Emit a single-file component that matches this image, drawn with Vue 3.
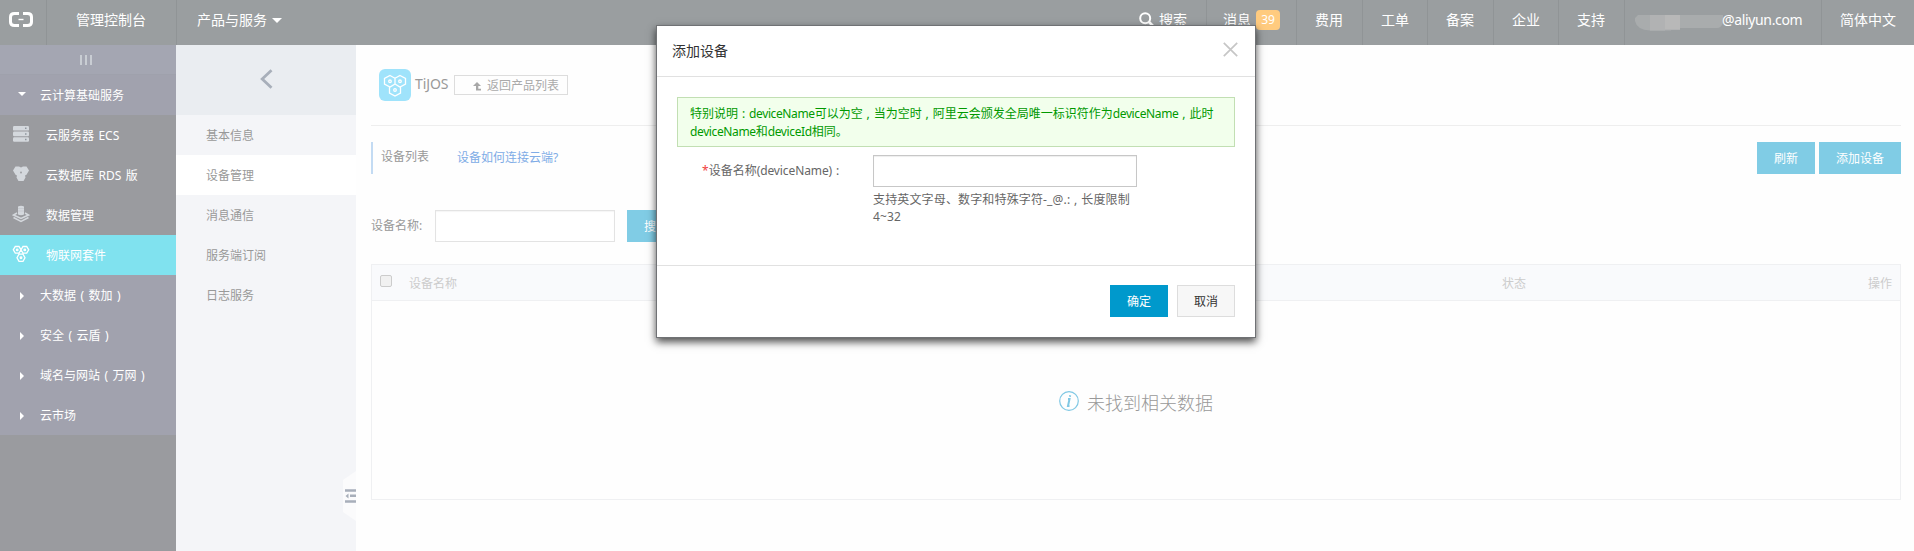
<script setup>
const links = [
  { t: '费用', w: 66 }, { t: '工单', w: 65 }, { t: '备案', w: 66 },
  { t: '企业', w: 65 }, { t: '支持', w: 66 }
]
const products = [
  { t: '云服务器 ECS', i: 'ecs' }, { t: '云数据库 RDS 版', i: 'rds' },
  { t: '数据管理', i: 'data' }, { t: '物联网套件', i: 'iot' }
]
const groups = [
  { t: '大数据', n: '数加' }, { t: '安全', n: '云盾' },
  { t: '域名与网站', n: '万网' }, { t: '云市场' }
]
const subs = ['基本信息', '设备管理', '消息通信', '服务端订阅', '日志服务']
</script>

<template>
  <div class="page">
    <header class="top">
      <div class="logo">
        <svg width="24" height="15" viewBox="0 0 24 15" fill="none" stroke="#fff" stroke-width="3">
          <path d="M10 1.5H5.5Q1.5 1.5 1.5 5V10Q1.5 13.5 5.5 13.5H10M14 1.5H18.5Q22.5 1.5 22.5 5V10Q22.5 13.5 18.5 13.5H14" />
          <path d="M9.5 7.5H14.5" stroke-width="1.4" />
        </svg>
      </div>
      <div class="console">管理控制台</div>
      <div class="prod">产品与服务<i class="caret"></i></div>
      <div class="search">
        <svg width="16" height="16" viewBox="0 0 16 16" fill="none" stroke="#fff" stroke-width="2"><circle cx="6.2" cy="6.2" r="5" /><path d="M10 10L14.5 14.5" stroke-width="2.6" /></svg>
        <span>搜索</span>
      </div>
      <div class="msg">消息<b class="badge">39</b></div>
      <div v-for="l in links" :key="l.t" class="link" :style="{ width: l.w + 'px' }">{{ l.t }}</div>
      <div class="account">
        <svg width="88" height="17" viewBox="0 0 88 17"><path d="M3 0H88V8Q86 13 82 13H45V15H36V15.500H15Q2 15 0 6V3Z" fill="#a9acad" /><path d="M15 0H30V15.500H15Z" fill="#b1b2b3" /><path d="M30 0H45V14.500H30Z" fill="#b8b8b8" /></svg>
        <span>@aliyun.com</span>
      </div>
      <div class="lang">简体中文</div>
    </header>

    <div class="body">
      <nav class="side">
        <div class="toggle"><i></i><i></i><i></i></div>
        <div class="group"><span class="arr"><i class="down"></i></span>云计算基础服务</div>
        <div v-for="p in products" :key="p.t" class="item" :class="{ on: p.i === 'iot' }">
          <svg v-if="p.i === 'ecs'" width="18" height="18" viewBox="0 0 18 18"><g fill="#d4d8dd"><rect x="1" y="1" width="16" height="4.6" rx="1.2" /><rect x="1" y="6.6" width="16" height="4.6" rx="1.2" /><rect x="1" y="12.2" width="16" height="4.6" rx="1.2" /></g><path d="M13 3.3h1.5M13 8.9h1.5M13 14.5h1.5" stroke="#8f969f" stroke-width="1.5" /></svg>
          <svg v-else-if="p.i === 'rds'" width="18" height="18" viewBox="0 0 18 18"><path d="M3.5 1.5H7L9 2.600 11 1.500H14.5L17 5.5 14.5 9.8 13 10.5 13.5 12.5 11.5 16H6.5L4.500 12.500 5 10.5 3.5 9.800 1 5.5Z" fill="#d4d8dd" /><circle cx="9" cy="7.5" r=".9" fill="#9a9b9f" /></svg>
          <svg v-else-if="p.i === 'data'" width="18" height="18" viewBox="0 0 18 18"><path d="M6 1.500Q9 .2 12 1.500V9.500Q9 11 6 9.500Z" fill="#d4d8dd" /><path d="M5 8L1.500 10 9 13.500 16.500 10 13 8M1.500 12.500L9 16.300 16.500 12.500" fill="none" stroke="#d4d8dd" stroke-width="1.500" /><path d="M6 3.5h6M6 6h6" stroke="#c0c4ca" stroke-width=".6" /></svg>
          <svg v-else width="18" height="18" viewBox="0 0 18 18" fill="none" stroke="#fff" stroke-width="1.300"><path d="M3.300 1.500H7L9 4.800 7 8.200H3.300L1.300 4.800ZM11 1.500H14.700L16.700 4.800 14.700 8.200H11L9 4.800ZM7 9.200H11L13 12.700 11 16.300H7L5 12.700Z" /><circle cx="5.200" cy="4.900" r=".8" /><circle cx="12.800" cy="4.900" r=".8" /><circle cx="9" cy="12.700" r=".8" /></svg>
          <span>{{ p.t }}</span>
        </div>
        <div v-for="g in groups" :key="g.t" class="group"><span class="arr"><i class="right"></i></span>{{ g.t }}<template v-if="g.n"><i class="paren">(</i>{{ g.n }}<i class="paren">)</i></template></div>
      </nav>

      <nav class="sub">
        <div class="back"><svg width="13" height="20" viewBox="0 0 13 20" fill="none" stroke="#a8afba" stroke-width="2.800"><path d="M11.500 1.200L2.200 10 11.500 18.800" /></svg></div>
        <div v-for="(s, n) in subs" :key="s" class="subitem" :class="{ cur: n === 1 }">{{ s }}</div>
        <svg class="handle" width="13" height="50" viewBox="0 0 13 50"><path d="M13 0L0 9V41L13 50Z" fill="#fbfbfc" /><path d="M2 19.500H13M7 24.800H13M2 30.500H13" stroke="#a8afba" stroke-width="2.600" /><path d="M5.500 22.500V27.500L2.500 25Z" fill="#a8afba" /></svg>
      </nav>

      <main class="main">
        <div class="title">
          <svg width="32" height="32" viewBox="0 0 32 32" fill="none" stroke="#fff" stroke-width="1.300"><rect width="32" height="32" rx="6" fill="#9fe3fb" stroke="none" /><path d="M11 6.500L16 9.300V15L11 18 5.500 15V9.300ZM21 6.500L26.500 9.300V15L21 18 16 15V9.300ZM16 15L21.500 18.500V24L16 27 10.500 24V18.500Z" /><circle cx="11" cy="12.300" r="1.300" /><circle cx="21" cy="12.300" r="1.300" /><circle cx="16" cy="21" r="1.300" /></svg>
          <span class="name">TiJOS</span>
          <span class="return"><svg width="9" height="9" viewBox="0 0 9 9"><path d="M4 0L8 4H5.300V6.800H8V8.500H3V4H0Z" fill="#a8a8a8" /></svg>返回产品列表</span>
        </div>
        <div class="tabs">
          <span class="tab">设备列表</span><a class="help">设备如何连接云端<span>?</span></a>
          <button class="btn refresh">刷新</button><button class="btn add">添加设备</button>
        </div>
        <div class="filter"><label>设备名称:</label><span class="field"></span><button class="btn find">搜索</button></div>
        <div class="table">
          <div class="thead"><i class="check"></i><span class="c1">设备名称</span><span class="c2">状态</span><span class="c3">操作</span></div>
          <div class="empty">
            <svg width="20" height="20" viewBox="0 0 20 20" fill="none" stroke="#80c8e4"><circle cx="10" cy="10" r="9.300" stroke-width="1.200" /><path d="M9 8H10.500L9 15H10.500M11.200 4.200L10.900 5.800" stroke-width="2" /></svg>
            <span>未找到相关数据</span>
          </div>
        </div>
      </main>
    </div>

    <section class="modal">
      <div class="mhead"><span>添加设备</span><svg width="15" height="15" viewBox="0 0 15 15" stroke="#c6c6c6" stroke-width="1.700"><path d="M.8 .8L14.200 14.200M14.200 .8L.8 14.200" /></svg></div>
      <div class="mbody">
        <div class="alert">特别说明<i class="p">:</i><span class="en">deviceName</span>可以为空<i class="p">,</i>当为空时<i class="p">,</i>阿里云会颁发全局唯一标识符作为<span class="en">deviceName</span><i class="p">,</i>此时<br><span class="en">deviceName</span>和<span class="en">deviceId</span>相同。</div>
        <div class="row">
          <div class="lab"><em>*</em>设备名称<span class="wide">(deviceName)</span><i class="p">:</i></div>
          <div class="ctl"><div class="input"></div><p>支持英文字母、数字和特殊字符-_@.:<i class="p">,</i>长度限制<br>4~32</p></div>
        </div>
      </div>
      <div class="mfoot"><button class="ok">确定</button><button class="cancel">取消</button></div>
    </section>
  </div>
</template>

<style>
html, body { margin: 0; overflow: hidden; }
</style>
<style scoped>
* { box-sizing: border-box; }
.page { position: relative; width: 1914px; height: 551px; overflow: hidden; background: #fefefe; font: 12px/18px "Noto Sans", "Noto Sans CJK SC", sans-serif; color: #999; }
svg { display: block; flex: none; }
i, em { font-style: normal; }
button { border: 0; padding: 0; font: inherit; display: block; }
.top { display: flex; height: 45px; background: #9a9ea0; color: #fff; font-size: 14px; line-height: 40px; white-space: nowrap; }
.top > div { flex: none; border-right: 1px solid #909496; }
.logo { width: 47px; padding: 12px 0 0 9px; }
.console { width: 130px; padding-left: 29px; }
.top .prod { width: 962px; padding-left: 20px; display: flex; border: 0; }
.caret { border: 5px solid transparent; border-top-color: #fff; border-bottom: 0; margin: 18px 0 0 5px; height: 0; }
.top .search { width: 68px; display: flex; gap: 4px; }
.search svg { margin-top: 12px; }
.msg { width: 90px; padding-left: 16px; display: flex; }
.badge { background: #ffcb7f; width: 24px; height: 20px; line-height: 20px; margin: 10px 0 0 5px; border-radius: 4px; text-align: center; font-size: 12px; font-weight: 400; }
.link { padding-left: 18px; }
.account { width: 197px; padding-left: 10px; display: flex; }
.account svg { margin-top: 15px; }
.account span { margin-left: -1px; letter-spacing: -.35px; }
.top .lang { width: 92px; padding-left: 18px; border: 0; }

.body { display: flex; height: 506px; }
.side { width: 176px; background: #9a9b9f; color: #fff; flex: none; }
.toggle { height: 30px; background: #a4a6b2; border-bottom: 1px solid #9fa1ac; display: flex; gap: 3px; padding: 10px 0 0 80px; }
.toggle i { width: 2px; height: 10px; background: #c9cdd3; }
.group { height: 40px; line-height: 42px; background: #a1a2ae; display: flex; }
.paren { width: 12.5px; text-align: center; }
.arr { width: 40px; padding-left: 20px; display: flex; align-items: center; }
.down { border: 4px solid transparent; border-top-color: #fff; border-bottom: 0; margin-left: -2px; margin-bottom: 2px; }
.right { border: 4px solid transparent; border-left-color: #fff; border-right: 0; margin-top: 2px; }
.item { height: 40px; line-height: 42px; display: flex; padding-left: 12px; word-spacing: 1.3px; }
.item svg { margin: 10px 16px 0 0; }
.item.on { background: #80e2ef; }
.sub { width: 180px; background: #f4f5f8; flex: none; position: relative; }
.back { height: 70px; background: #eaedf1; padding: 24px 0 0 84px; }
.subitem { height: 40px; line-height: 42px; padding-left: 30px; }
.cur { background: #fff; }
.handle { position: absolute; right: 0; top: 426px; }

.main { width: 1530px; margin-left: 15px; }
.title { height: 81px; border-bottom: 1px solid #eee; display: flex; padding: 24px 0 0 8px; }
.name { font-size: 14px; line-height: 30px; width: 39px; margin-left: 4px; letter-spacing: -.1px; }
.return { margin-top: 6px; width: 114px; height: 20px; border: 1px solid #ddd; display: flex; padding-left: 18px; line-height: 19px; color: #aaa; }
.return svg { margin: 6px 5px 0 0; }
.tabs { display: flex; margin-top: 16px; height: 32px; }
.tab { border-left: 2px solid #c3dbf3; padding-left: 8px; width: 86px; line-height: 30px; }
.help { color: #80ace6; line-height: 32px; }
.btn { height: 32px; background: #80cce5; color: #fff; line-height: 34px; }
.refresh { width: 58px; margin-left: auto; margin-right: 4px; }
.add { width: 82px; }
.filter { display: flex; margin-top: 36px; height: 32px; line-height: 32px; }
.filter label { width: 64px; }
.field { width: 180px; border: 1px solid #e3e3e3; background: #fff; box-shadow: inset 0 1px 1px #f5f5f5; margin-right: 12px; }
.find { width: 58px; }
.table { margin-top: 22px; height: 236px; border: 1px solid #eff0f2; }
.thead { height: 36px; background: #f9fafc; border-bottom: 1px solid #eff0f2; display: flex; line-height: 38px; color: #ccc; }
.check { width: 12px; height: 12px; border: 1px solid #ccc; border-radius: 2px; background: #f1f1f1; margin: 10px 17px 0 8px; }
.c1 { width: 1093px; }
.c3 { margin-left: auto; margin-right: 8px; }
.empty { display: flex; padding: 90px 0 0 687px; gap: 8px; font-size: 18px; line-height: 24px; font-weight: 300; }

.modal { position: absolute; left: 656px; top: 25px; width: 600px; height: 313px; background: #fff; border: 1px solid #707275; box-shadow: 0 4px 8px rgba(0,0,0,.7); color: #666; }
.mhead { height: 51px; border-bottom: 1px solid #e1e1e1; display: flex; justify-content: space-between; padding: 16px 17px 0 15px; font-size: 14px; line-height: 17px; color: #333; }
.mbody { height: 189px; padding: 20px; border-bottom: 1px solid #e1e1e1; }
.alert { width: 558px; height: 50px; border: 1px solid #c2dfb3; background: #f2ffec; color: #090; padding: 7px 0 0 12px; white-space: nowrap; }
.en { letter-spacing: -.38px; }
.wide { letter-spacing: -.1px; }
.p { display: inline-block; width: 11px; text-align: center; }
.row { display: flex; margin-top: 8px; }
.lab { width: 196px; padding-left: 25px; line-height: 31px; white-space: nowrap; }
.lab em { color: #f04040; }
.input { width: 264px; height: 32px; border: 1px solid #c7c7c7; box-shadow: inset 0 1px 1px #eee; }
.ctl p { margin: 4px 0 0; line-height: 17px; white-space: nowrap; letter-spacing: .15px; }
.mfoot { display: flex; justify-content: flex-end; padding: 19px 20px 0 0; gap: 9px; }
.mfoot button { width: 58px; height: 32px; line-height: 34px; }
.ok { background: #09c; color: #fff; }
.mfoot .cancel { background: #f7f7f7; color: #333; border: 1px solid #ddd; line-height: 32px; }
</style>
